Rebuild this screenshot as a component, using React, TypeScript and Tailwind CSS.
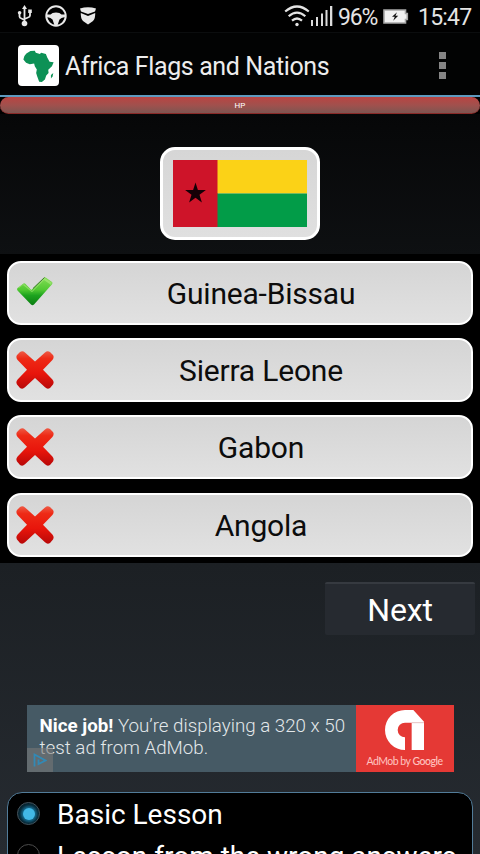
import clsx from "clsx";

type Option = { label: string; correct: boolean };

const OPTIONS: Option[] = [
  { label: "Guinea-Bissau", correct: true },
  { label: "Sierra Leone", correct: false },
  { label: "Gabon", correct: false },
  { label: "Angola", correct: false },
];

const LESSONS = [
  { label: "Basic Lesson", selected: true },
  { label: "Lesson from the wrong answers", selected: false },
];

function UsbIcon() {
  return (
    <svg width="16" height="22" viewBox="0 0 16 22" fill="none" stroke="#e8e8e8" strokeWidth="1.8">
      <path d="M7.5 3v15M2.5 8v3.500q0 1.500 2 2l3 1.500M13 7v3.500q0 1.500-2 2l-3.500 1.500" />
      <path d="M7.5 0 5 4h5z" fill="#e8e8e8" stroke="none" />
      <circle cx="7.5" cy="18.5" r="2.8" fill="#e8e8e8" stroke="none" />
      <circle cx="2.6" cy="7.8" r="1.8" fill="#e8e8e8" stroke="none" />
      <path d="M11.200 4.500h3.600v3.600h-3.600z" fill="#e8e8e8" stroke="none" />
    </svg>
  );
}

function WheelIcon() {
  return (
    <svg width="22" height="22" viewBox="0 0 22 22" fill="none">
      <circle cx="11" cy="11" r="9.7" stroke="#e8e8e8" strokeWidth="2" />
      <path d="M2 9.500h3.500Q7 7.500 11 7.500t5.500 2H20v2.500q-4 .5-5.500 2.500L12.600 20H9.400l-1.900-5.500Q6 12.500 2 12z" fill="#e8e8e8" />
    </svg>
  );
}

function MaskIcon() {
  return (
    <svg width="16" height="18" viewBox="0 0 16 18" fill="#e8e8e8">
      <path d="M0 1.500Q8-1 16 1.500L15 4.500 8 7 1 4.500z" />
      <path d="M.8 6 8 9l7.200-3q.3 5-2.200 8l-5 3.500L3 14Q.5 11 .8 6z" />
    </svg>
  );
}

function WifiIcon() {
  return (
    <svg width="26" height="22" viewBox="0 0 26 22" fill="none" stroke="#e4e4e4" strokeWidth="2.2">
      <path d="M1.200 6.500q11.800-10 23.600 0" />
      <path d="M4.700 11.300q8.300-7.400 16.600 0" />
      <path d="M8 15.700q5-4.400 10 0" />
      <circle cx="13" cy="19.500" r="1.700" fill="#e4e4e4" stroke="none" />
    </svg>
  );
}

function SignalIcon() {
  return (
    <svg width="22" height="20" viewBox="0 0 22 20" fill="#dcdcdc">
      <path d="M0 14h2v6H0zM5 11h2v9H5zM10 7.500h2V20h-2zM14.500 4h2v16h-2zM19 0h2.300v20H19z" />
    </svg>
  );
}

function BatteryIcon() {
  return (
    <svg width="26" height="15" viewBox="0 0 26 15">
      <path d="M1 1h21.500v3.500h1.800v6h-1.800V14H1z" fill="#f2f2f2" stroke="#a8a8a8" strokeWidth="1.600" />
      <path d="m14 3.200-5 4.600h2.800l-1.600 4 5-5h-2.800z" fill="#111" />
    </svg>
  );
}

function AfricaIcon() {
  return (
    <svg viewBox="53 135 122 122" className="h-[41px] w-[41px] rounded-[4px] bg-white">
      <path
        d="m78 160 12-7 13-1 3 6 12 4 4-4 14 4 4 10 7 13 12 1-5 12-11 11 1 9-7 8-4 12-9 7-8-1-6-16-3-10 2-10-6-10-2-8-13 2-11-4-8-10 3-10z"
        fill="#0d9156"
      />
      <path d="m151 224 7-6-2 10-5 7z" fill="#0d9156" />
    </svg>
  );
}

function CheckIcon() {
  return (
    <svg width="38" height="32" viewBox="0 0 38 32">
      <defs>
        <linearGradient id="check" x1="0" y1="0" x2="0" y2="1">
          <stop offset="0" stopColor="#83dd55" />
          <stop offset=".45" stopColor="#50c832" />
          <stop offset=".65" stopColor="#1da31f" />
          <stop offset="1" stopColor="#0a7d12" />
        </linearGradient>
      </defs>
      <path d="M1.500 12 7.500 7.500q1-.6 1.800.3l6 6.200L27.500 2q1.200-1.200 2.500-.2l6 4.200q1 1 0 2.200L18 28.500q-1.500 1.500-3 0L1.500 14.500q-1-1.300 0-2.500z" fill="url(#check)" />
      <path d="M28.500 2 36 6.500 35 9l-7-5-12 12.300L7 9l-4 3-1-.5L8 8l8 7z" fill="#b9ee8c" opacity=".5" />
      <path d="m17 12.500 11.500-11" stroke="#437a35" strokeWidth="1" />
    </svg>
  );
}

function CrossIcon() {
  return (
    <svg width="38" height="38" viewBox="0 0 38 38">
      <defs>
        <linearGradient id="cross" x1="0" y1="0" x2="0" y2="1">
          <stop offset="0" stopColor="#ee5a45" />
          <stop offset=".2" stopColor="#ee2a16" />
          <stop offset=".6" stopColor="#e8150b" />
          <stop offset="1" stopColor="#b80808" />
        </linearGradient>
      </defs>
      <path
        d="M1 4 4 1Q6.500-.8 9 1.400L19 10.500l10-9.100Q31.500-.8 34 1L37 4q1.500 2.500-.6 5l-9.400 9.700 9.400 9.700q2.100 2.500.6 5l-3 3.500q-2.500 1.800-5-.6L19 27l-10 9.300q-2.500 2.400-5 .6L1 33.400q-1.500-2.500.6-5l9.400-9.700L1.600 9Q-.5 6.500 1 4z"
        fill="url(#cross)"
      />
    </svg>
  );
}

function AdMobLogo() {
  return (
    <svg width="39" height="40" viewBox="435 60 117 120" fill="#fff">
      <path d="M495 180a60 60 0 0 1 0-120h25l32 35v85h-37V98h-20a22 22 0 0 0 0 44z" />
      <path d="M515 98h37" stroke="#d9a5a3" strokeWidth="2" />
    </svg>
  );
}

function StatusBar() {
  return (
    <div className="flex h-[33px] shrink-0 items-center border-b border-[#0b0d0e] bg-black pl-[17px] pr-2 text-[#e4e4e4]">
      <UsbIcon />
      <div className="ml-3"><WheelIcon /></div>
      <div className="ml-[13px]"><MaskIcon /></div>
      <div className="ml-auto flex items-center">
        <WifiIcon />
        <div className="ml-px"><SignalIcon /></div>
        <span className="ml-[5px] w-[41px] pt-[2px] text-[23px] leading-none tracking-[-1.2px]">96%</span>
        <div className="ml-[4px]"><BatteryIcon /></div>
        <span className="ml-[9px] w-[54px] pt-[2px] text-[23px] leading-none tracking-[-0.8px]">15:47</span>
      </div>
    </div>
  );
}

function ActionBar() {
  return (
    <header className="flex h-[62px] shrink-0 items-center bg-[#020303] pl-[18px] pr-[34px] pt-[3px]">
      <AfricaIcon />
      <h1 className="ml-[6px] whitespace-nowrap pt-px text-[25px] leading-none tracking-[-0.38px] text-[#ededed]">
        Africa Flags and Nations
      </h1>
      <div className="ml-auto flex flex-col gap-[3px]">
        <i className="h-[7px] w-[7px] bg-[#858585]" />
        <i className="h-[7px] w-[7px] bg-[#858585]" />
        <i className="h-[7px] w-[7px] bg-[#858585]" />
      </div>
    </header>
  );
}

function Flag() {
  return (
    <div className="mx-auto mt-[33px] flex h-[93px] w-[160px] shrink-0 items-center justify-center rounded-[15px] border-[3px] border-white bg-gradient-to-b from-[#d6d6d6] to-[#e0e0e0]">
      <svg width="134" height="67" viewBox="0 0 134 67">
        <path d="M0 0h45v67H0z" fill="#ce1429" />
        <path d="M44.500 0H134v33.500H44.500z" fill="#fbd217" />
        <path d="M44.500 33.500H134V67H44.500z" fill="#029c48" />
        <path d="m22.500 22.500 2.400 7.500h8l-6.400 4.700 2.400 7.700-6.400-4.700-6.400 4.700 2.400-7.700L12.100 30h8z" fill="#150006" />
      </svg>
    </div>
  );
}

function OptionRow({ option }: { option: Option }) {
  return (
    <button className="flex h-[64px] w-full items-center rounded-[14px] border-2 border-white bg-gradient-to-b from-[#d5d5d5] to-[#e1e1e1] pl-[7px]">
      <div className={clsx("w-[38px]", option.correct && "-mt-[2px]")}>
        {option.correct ? <CheckIcon /> : <CrossIcon />}
      </div>
      <span className="grow pr-[3px] pt-[2px] text-center text-[30px] leading-none tracking-[-0.2px] text-[#0c0c0c]">
        {option.label}
      </span>
    </button>
  );
}

function AdBanner() {
  return (
    <div className="relative ml-[26.500px] mt-[70px] flex h-[67px] w-[427px] shrink-0">
      <div className="grow whitespace-nowrap bg-[#465a65] pl-[13px] pt-[10px] text-[18.750px] font-light leading-[22px] text-[#e3e8ea]">
        <p><b className="font-bold text-white">Nice job!</b> You’re displaying a 320 x 50</p>
        <p>test ad from AdMob.</p>
      </div>
      <div className="flex w-[98px] flex-col items-center bg-[#e53935] pt-[5px]">
        <AdMobLogo />
        <span className="mt-[4px] whitespace-nowrap font-[Lato] text-[10.500px] leading-[14px] tracking-[-0.5px] text-[#ffc4c0]">
          AdMob by <span className="font-medium">Google</span>
        </span>
      </div>
      <div className="absolute bottom-0 left-0 flex h-[24px] w-[26px] items-center justify-center bg-[#777]/60">
        <svg width="14" height="15" viewBox="0 0 14 15" fill="none" stroke="#3289b5" strokeWidth="1.800">
          <path d="M1.500 13.500v-12l11 6-7 3.500V6.500" />
        </svg>
      </div>
    </div>
  );
}

function Radio({ selected }: { selected: boolean }) {
  return (
    <span
      className={clsx(
        "-mt-[3px] flex h-[23px] w-[23px] shrink-0 items-center justify-center rounded-full border",
        selected ? "border-[#45525a] bg-[#06222e]" : "border-[#4a4a4a]"
      )}
    >
      {selected && <span className="h-[12px] w-[12px] rounded-full bg-[#42b8e6] shadow-[0_0_3px_2px_#176d91]" />}
    </span>
  );
}

export default function App() {
  return (
    <div className="flex h-[854px] w-[480px] flex-col overflow-hidden bg-[linear-gradient(#000_0%,#0e1012_30%,#1c2024_66%,#262b31_100%)] font-[Roboto,sans-serif]">
      <StatusBar />
      <ActionBar />
      <div className="h-[2px] shrink-0 bg-[#5e9abf]" />
      <div className="h-[17px] shrink-0 bg-black">
        <div className="h-[17px] rounded-full border-b border-[#8a2a28] bg-gradient-to-b from-[#b94442] via-[#a1504d] to-[#7d5551] text-center text-[8px] leading-[17px] text-white">
          HP
        </div>
      </div>

      <Flag />

      <div className="mt-[14px] flex h-[309px] shrink-0 flex-col gap-[13.400px] bg-black px-[7px] pt-[6.500px]">
        {OPTIONS.map((option) => (
          <OptionRow key={option.label} option={option} />
        ))}
      </div>

      <button className="ml-[325px] mt-[19px] h-[53px] w-[150px] shrink-0 rounded-[2px] border-t-2 border-[#363a40] bg-[#262a30] text-[32px] leading-none tracking-[-0.2px] text-white">
        Next
      </button>

      <AdBanner />

      <div className="mx-[7px] mt-[20px] h-[100px] shrink-0 overflow-hidden rounded-t-[15px] border border-[#527c99] bg-black pl-[9px] pt-px">
        {LESSONS.map((lesson) => (
          <label key={lesson.label} className="flex h-[42px] items-center gap-[17px]">
            <Radio selected={lesson.selected} />
            <span className="whitespace-nowrap text-[28px] leading-none text-white">{lesson.label}</span>
          </label>
        ))}
      </div>
    </div>
  );
}
